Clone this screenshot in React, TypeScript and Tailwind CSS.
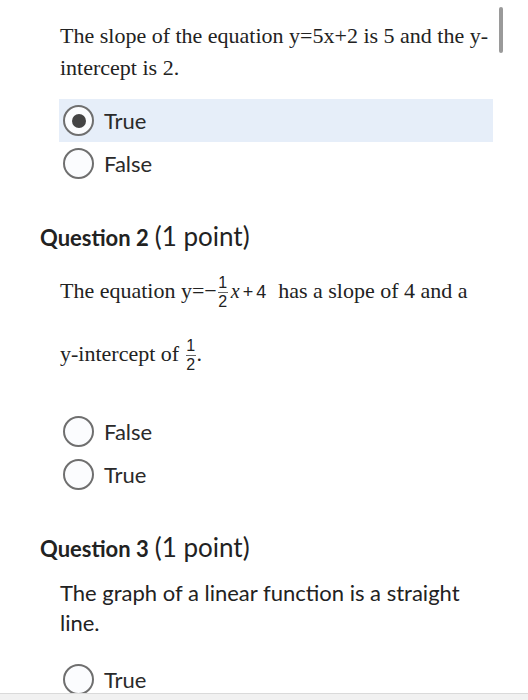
import React from "react";

const sans = { fontFamily: "Lato, 'Noto Sans', sans-serif" };
const serif = { fontFamily: "'Liberation Serif', 'Times New Roman', serif" };
const msans = { fontFamily: "'Liberation Sans', Arial, sans-serif" };

function Radio({ label, checked }: { label: string; checked?: boolean }) {
  return (
    <div
      className={`flex items-center h-[43px] pl-[4px] w-[434px] ${checked ? "bg-[#e6eef9]" : ""}`}
    >
      <span className="w-[31px] h-[31px] rounded-full border-2 border-[#6f6f6f] bg-[#fbfcfe] flex items-center justify-center shrink-0">
        {checked && <span className="w-[14px] h-[14px] rounded-full bg-[#444]" />}
      </span>
      <span className="ml-[10px] text-[22px] text-[#2a2a2a]" style={sans}>
        {label}
      </span>
    </div>
  );
}

function Frac() {
  return (
    <span className="inline-flex flex-col items-center align-middle mx-[1px] leading-none text-[16px] text-[#222]" style={msans}>
      <span className="leading-[16px]">1</span>
      <span className="w-[10px] h-px bg-[#666] my-[1px]" />
      <span className="leading-[16px]">2</span>
    </span>
  );
}

function Heading({ n }: { n: number }) {
  return (
    <div className="flex items-baseline h-[30px] leading-[30px] text-[#222]" style={sans}>
      <span className="font-bold text-[22px]">Question {n}</span>
      <span className="text-[26px] ml-[6px]">(1 point)</span>
    </div>
  );
}

export default function App() {
  return (
    <div className="relative w-[528px] h-[700px] overflow-hidden bg-white">
      <div className="absolute left-[499px] top-[7px] w-[4px] h-[46px] rounded-full bg-[#9a9a9a]" />
      <div className="pl-[40px] pt-[20px]">
        <div className="pl-[20px]">
          <p className="text-[22px] leading-[32px] text-[#222] w-[440px]" style={serif}>
            The slope of the equation y=5x+2 is 5 and the y-intercept is 2.
          </p>
          <div className="mt-[15px] -ml-[1px]">
            <Radio label="True" checked />
            <Radio label="False" />
          </div>
        </div>

        <div className="mt-[36px]">
          <Heading n={2} />
        </div>
        <div className="pl-[20px] mt-[9px]">
          <p className="text-[22px] leading-[62px] text-[#222] whitespace-nowrap" style={serif}>
            The equation y=−<Frac />
            <span className="text-[18px] ml-[2px] mr-[12px]" style={msans}>
              <i style={serif} className="text-[20px]">x</i>
              <span className="mx-[3px]">+</span>4
            </span>
            has a slope of 4 and a
            <br />
            y-intercept of <Frac />.
          </p>
          <div className="mt-[25px] -ml-[1px]">
            <Radio label="False" />
            <Radio label="True" />
          </div>
        </div>

        <div className="mt-[36px]">
          <Heading n={3} />
        </div>
        <div className="pl-[20px] mt-[16px]">
          <p className="text-[22px] leading-[30px] text-[#222] w-[420px]" style={sans}>
            The graph of a linear function is a straight line.
          </p>
          <div className="mt-[20px] -ml-[1px]">
            <Radio label="True" />
          </div>
        </div>
      </div>
      <div className="absolute left-0 right-0 bottom-0 h-[7px] bg-[#f1f1f1] border-t border-[#dadada]" />
    </div>
  );
}
